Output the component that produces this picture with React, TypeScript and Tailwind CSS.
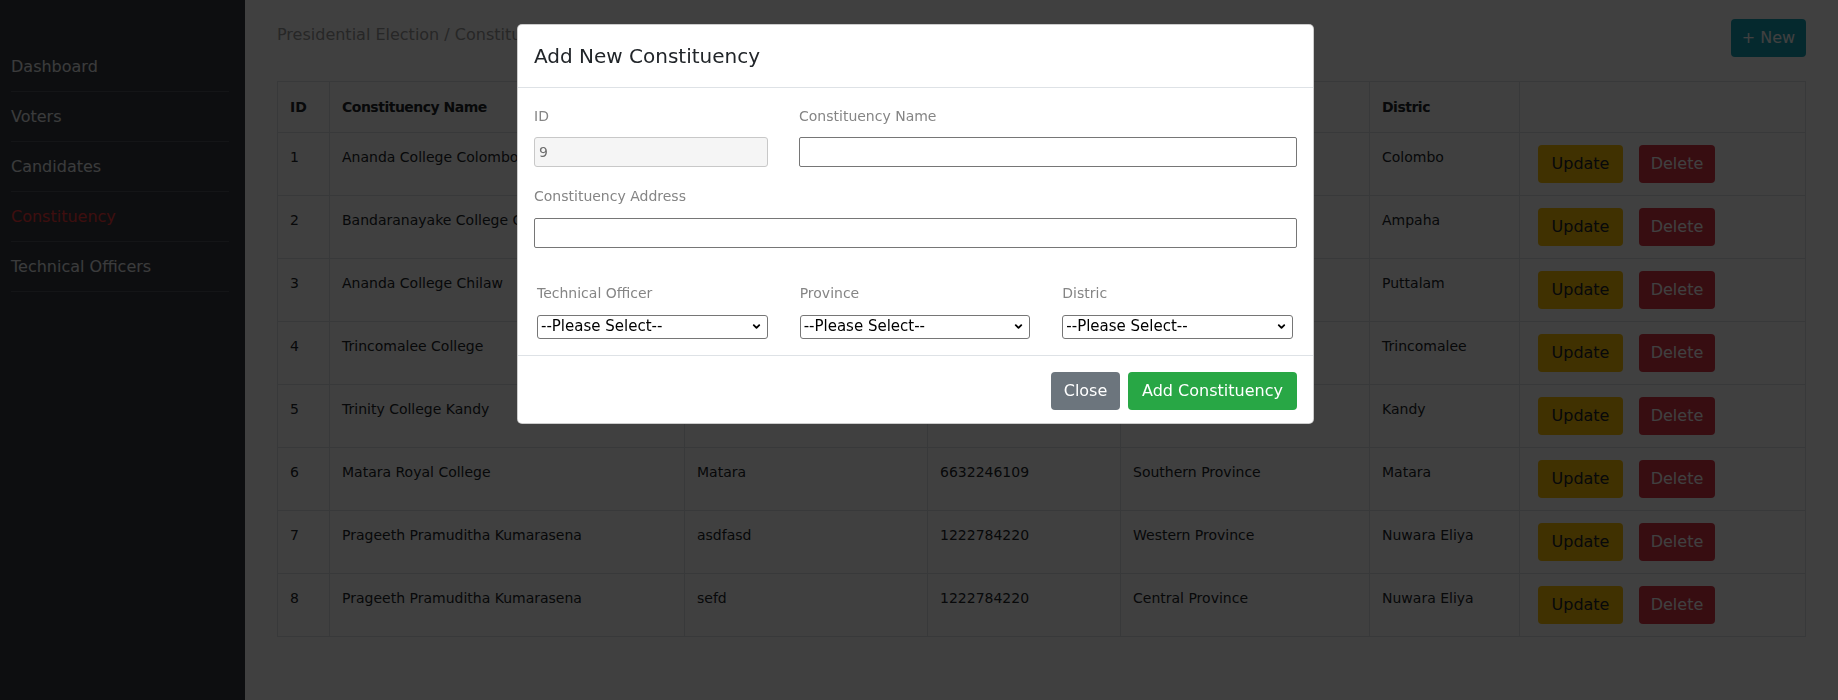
import { ChevronDown } from "lucide-react";

const rows = [
  { id: 1, name: "Ananda College Colombo", address: "Colombo 10", contact: "0112695011", province: "Western Province", district: "Colombo" },
  { id: 2, name: "Bandaranayake College Gampaha", address: "Gampaha", contact: "0332222431", province: "Western Province", district: "Ampaha" },
  { id: 3, name: "Ananda College Chilaw", address: "Chilaw", contact: "0322222345", province: "North Western Province", district: "Puttalam" },
  { id: 4, name: "Trincomalee College", address: "Trincomalee", contact: "0262222140", province: "Eastern Province", district: "Trincomalee" },
  { id: 5, name: "Trinity College Kandy", address: "Kandy", contact: "0812233421", province: "Central Province", district: "Kandy" },
  { id: 6, name: "Matara Royal College", address: "Matara", contact: "6632246109", province: "Southern Province", district: "Matara" },
  { id: 7, name: "Prageeth Pramuditha Kumarasena", address: "asdfasd", contact: "1222784220", province: "Western Province", district: "Nuwara Eliya" },
  { id: 8, name: "Prageeth Pramuditha Kumarasena", address: "sefd", contact: "1222784220", province: "Central Province", district: "Nuwara Eliya" },
];

const navItems = ["Dashboard", "Voters", "Candidates", "Constituency", "Technical Officers"];

function Sidebar() {
  return (
    <aside className="w-[245px] shrink-0 h-[700px] bg-[#343a40]">
      <ul className="mt-[42px] ml-[11px] mr-[16px]">
        {navItems.map((item) => (
          <li
            key={item}
            className={`h-[50px] flex items-center border-b border-[#50565e] text-[16px] ${
              item === "Constituency" ? "text-[#f53b3f]" : "text-[#e9ecef]"
            }`}
          >
            {item}
          </li>
        ))}
      </ul>
    </aside>
  );
}

function SelectBox() {
  return (
    <div className="relative">
      <select className="appearance-none w-full h-[24px] bg-white border border-[#767676] rounded-[3px] pl-[3px] text-[15px] text-black leading-none">
        <option>--Please Select--</option>
      </select>
      <ChevronDown className="absolute right-[6px] top-[7px] w-[11px] h-[11px] text-black pointer-events-none" strokeWidth={4} />
    </div>
  );
}

function Modal() {
  return (
    <div className="fixed inset-0 flex justify-center pt-[24px] pr-[7px]">
      <div className="w-[797px] h-[400px] bg-white rounded-[5px] border border-black/20">
        <div className="px-[16px] py-[16px] border-b border-[#dee2e6]">
          <h5 className="text-[20px] leading-[30px] text-[#212529]">Add New Constituency</h5>
        </div>
        <div className="p-[16px]">
          <div className="flex gap-[31px]">
            <div className="w-[234px]">
              <label className="block text-[14px] leading-[24px] text-[#858585]">ID</label>
              <input
                disabled
                value="9"
                className="mt-[9px] w-full h-[30px] bg-[#f5f5f5] border border-[#c8c8c8] rounded-[3px] px-[4px] text-[14px] text-[#6d6d6d]"
              />
            </div>
            <div className="flex-1">
              <label className="block text-[14px] leading-[24px] text-[#858585]">Constituency Name</label>
              <input className="mt-[9px] w-full h-[30px] bg-white border border-[#767676] rounded-[2px] px-[4px] text-[14px]" />
            </div>
          </div>
          <div className="mt-[17px]">
            <label className="block text-[14px] leading-[24px] text-[#858585]">Constituency Address</label>
            <input className="mt-[10px] w-full h-[30px] bg-white border border-[#767676] rounded-[2px] px-[4px] text-[14px]" />
          </div>
          <div className="mt-[33px] grid grid-cols-3 gap-[32px] pl-[3px] pr-[4px]">
            <div>
              <label className="block text-[14px] leading-[24px] text-[#858585]">Technical Officer</label>
              <div className="mt-[9px]">
                <SelectBox />
              </div>
            </div>
            <div>
              <label className="block text-[14px] leading-[24px] text-[#858585]">Province</label>
              <div className="mt-[9px]">
                <SelectBox />
              </div>
            </div>
            <div>
              <label className="block text-[14px] leading-[24px] text-[#858585]">Distric</label>
              <div className="mt-[9px]">
                <SelectBox />
              </div>
            </div>
          </div>
        </div>
        <div className="border-t border-[#dee2e6] px-[12px] py-[12px] flex justify-end">
          <button className="m-[4px] h-[38px] w-[69px] rounded-[4px] bg-[#6c757d] text-white text-[16px]">Close</button>
          <button className="m-[4px] h-[38px] w-[169px] rounded-[4px] bg-[#28a745] text-white text-[16px]">Add Constituency</button>
        </div>
      </div>
    </div>
  );
}

export default function App() {
  return (
    <div className="relative w-[1838px] h-[700px] overflow-hidden flex bg-white" style={{ fontFamily: '"DejaVu Sans", sans-serif' }}>
      <Sidebar />
      <main className="flex-1 px-[32px] pt-[19px]">
        <div className="flex justify-between items-start">
          <h1 className="pt-[4px] text-[16px] leading-[24px] font-medium text-[#9a9a9a]">Presidential Election / Constituency</h1>
          <button className="h-[38px] w-[75px] rounded-[4px] bg-[#17a2b8] text-white text-[16px]">+ New</button>
        </div>
        <table className="mt-[24px] w-full table-fixed border-collapse border border-[#dee2e6] text-[14px] text-[#212529]">
          <thead>
            <tr>
              <th className="w-[52px] border border-[#dee2e6] px-[12px] py-[13px] text-left leading-[24px] font-bold">ID</th>
              <th className="w-[355px] border border-[#dee2e6] px-[12px] py-[13px] text-left leading-[24px] font-bold tracking-[-0.5px]">Constituency Name</th>
              <th className="w-[243px] border border-[#dee2e6] px-[12px] py-[13px] text-left leading-[24px] font-bold tracking-[-0.5px]">Address</th>
              <th className="w-[193px] border border-[#dee2e6] px-[12px] py-[13px] text-left leading-[24px] font-bold tracking-[-0.5px]">Contact No</th>
              <th className="w-[249px] border border-[#dee2e6] px-[12px] py-[13px] text-left leading-[24px] font-bold tracking-[-0.5px]">Province</th>
              <th className="w-[150px] border border-[#dee2e6] px-[12px] py-[13px] text-left leading-[24px] font-bold tracking-[-0.5px]">Distric</th>
              <th className="border border-[#dee2e6] px-[12px] py-[13px]"></th>
            </tr>
          </thead>
          <tbody>
            {rows.map((r) => (
              <tr key={r.id}>
                <td className="border border-[#dee2e6] px-[12px] py-[12px] align-top leading-[24px]">{r.id}</td>
                <td className="border border-[#dee2e6] px-[12px] py-[12px] align-top leading-[24px]">{r.name}</td>
                <td className="border border-[#dee2e6] px-[12px] py-[12px] align-top leading-[24px]">{r.address}</td>
                <td className="border border-[#dee2e6] px-[12px] py-[12px] align-top leading-[24px]">{r.contact}</td>
                <td className="border border-[#dee2e6] px-[12px] py-[12px] align-top leading-[24px]">{r.province}</td>
                <td className="border border-[#dee2e6] px-[12px] py-[12px] align-top leading-[24px]">{r.district}</td>
                <td className="border border-[#dee2e6] px-[12px] py-[12px] align-top">
                  <div className="flex gap-[16px] pl-[6px]">
                    <button className="h-[38px] w-[85px] rounded-[4px] bg-[#ffc107] text-[#212529] text-[16px]">Update</button>
                    <button className="h-[38px] w-[76px] rounded-[4px] bg-[#dc3545] text-white text-[16px]">Delete</button>
                  </div>
                </td>
              </tr>
            ))}
          </tbody>
        </table>
      </main>
      <div className="fixed inset-0 bg-black/75" />
      <Modal />
    </div>
  );
}
